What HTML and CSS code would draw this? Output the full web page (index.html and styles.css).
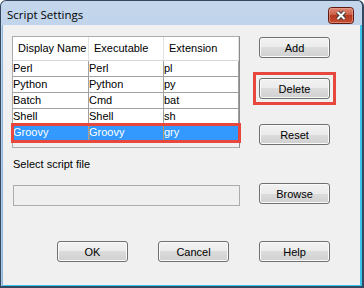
FILE: index.html
```html
<!DOCTYPE html>
<html lang="en">
<head>
  <meta charset="UTF-8" />
  <title>Script Settings</title>
  <link rel="stylesheet" href="styles.css">
</head>
<body>

<div class="window">
  <div class="titlebar">
    <span class="title">Script Settings</span>
    <div class="tb-exit">
      <svg width="26" height="17" viewBox="0 0 26 17">
        <defs>
          <linearGradient id="exitbg" x1="0" y1="0" x2="0" y2="1">
            <stop offset="0" stop-color="#dd8b78"/>
            <stop offset="0.5" stop-color="#cc5a42"/>
            <stop offset="0.5" stop-color="#b33a20"/>
            <stop offset="1" stop-color="#c84e32"/>
          </linearGradient>
        </defs>
        <rect x="0.5" y="0.5" width="25" height="16" rx="3" fill="url(#exitbg)" stroke="#5e1a12"/>
        <rect x="1.5" y="1.5" width="23" height="14" rx="2" fill="none" stroke="#e9a898" stroke-opacity="0.6"/>
        <path d="M9.5 5 L16.5 12 M16.5 5 L9.5 12" stroke="#3e3e3e" stroke-width="4" fill="none"/>
        <path d="M9.5 5 L16.5 12 M16.5 5 L9.5 12" stroke="#fff" stroke-width="2" fill="none"/>
      </svg>
    </div>
  </div>

  <div class="client">
    <div class="main">
      <div class="left">
        <div class="list">
          <div class="row head">
            <div class="cell">Display Name</div>
            <div class="cell">Executable</div>
            <div class="cell">Extension</div>
          </div>
          <div class="row">
            <div class="cell">Perl</div><div class="cell">Perl</div><div class="cell">pl</div>
          </div>
          <div class="row">
            <div class="cell">Python</div><div class="cell">Python</div><div class="cell">py</div>
          </div>
          <div class="row">
            <div class="cell">Batch</div><div class="cell">Cmd</div><div class="cell">bat</div>
          </div>
          <div class="row">
            <div class="cell">Shell</div><div class="cell">Shell</div><div class="cell">sh</div>
          </div>
          <div class="row selected marked">
            <div class="cell">Groovy</div><div class="cell focus">Groovy</div><div class="cell">gry</div>
          </div>
        </div>
        <div class="label">Select script file</div>
        <div class="field"></div>
      </div>

      <div class="side">
        <button class="btn btn-add">Add</button>
        <div class="mark-box">
          <button class="btn">Delete</button>
        </div>
        <button class="btn btn-reset">Reset</button>
        <button class="btn btn-browse">Browse</button>
      </div>
    </div>

    <div class="footer">
      <button class="btn">OK</button>
      <button class="btn">Cancel</button>
      <button class="btn">Help</button>
    </div>
  </div>
</div>

</body>
</html>
```

FILE: styles.css
```css
body {
  margin: 0;
  background: #fff;
  font-family: "Liberation Sans", Arial, sans-serif;
  font-size: 11px;
  color: #000;
}
.window {
  width: 364px;
  height: 288px;
  box-sizing: border-box;
  display: flex;
  flex-direction: column;
  background: linear-gradient(#c3d6ec, #a9c4e2);
  border: 1px solid #34495f;
  border-right-width: 2px;
  border-bottom-width: 2px;
  border-radius: 6px 6px 0 0;
}
.titlebar {
  height: 24px;
  display: flex;
  align-items: center;
  justify-content: space-between;
  padding: 0 8px 0 6px;
}
.title {
  font-family: "Open Sans", "Noto Sans", sans-serif;
  font-size: 11.5px;
  color: #000;
  margin-top: 3px;
}
.tb-exit {
  flex: none;
  width: 26px;
  height: 17px;
  margin-top: 4px;
}
.tb-exit svg {
  display: block;
}
.client {
  flex: 1;
  margin-left: 1px;
  background: #f0f0f0;
  border-left: 1px solid #8fb7dc;
  border-right: 2px solid #3fc5ec;
  border-bottom: 1px solid #3fc5ec;
  padding: 11px 0 0 9px;
}
.main {
  display: flex;
  gap: 19px;
}
.left {
  width: 228px;
}
.list {
  height: 112px;
  box-sizing: border-box;
  border: 1px solid #acacac;
  border-right-color: #8a8a8a;
  background: #f0f0f0;
}
.row {
  display: grid;
  grid-template-columns: 76px 75px 75px;
  height: 16px;
  background: #fff;
}
.row .cell {
  border-right: 1px solid #a0a0a0;
  border-bottom: 1px solid #a0a0a0;
  line-height: 15px;
  white-space: nowrap;
  overflow: hidden;
}
.row.head {
  height: 24px;
}
.row.head .cell {
  line-height: 23px;
  padding-left: 5px;
  border-right-color: #e3e3e3;
  border-bottom-color: #d8d8d8;
}
.row.selected {
  background: #3399ff;
  color: #fff;
}
.cell.focus {
  outline: 1px dotted #d98a35;
  outline-offset: -1px;
}
.row.marked {
  position: relative;
  z-index: 1;
  outline: 3px solid #e8473e;
  outline-offset: -1px;
}
.label {
  margin-top: 10px;
  line-height: 13px;
  padding-left: 1px;
}
.field {
  margin: 14px 0 0 1px;
  height: 21px;
  box-sizing: border-box;
  border: 1px solid #acacac;
  background: #efefef;
}
.side {
  display: flex;
  flex-direction: column;
  align-items: flex-start;
}
.btn {
  width: 71px;
  height: 21px;
  padding: 0;
  font-family: "Liberation Sans", Arial, sans-serif;
  font-size: 11px;
  color: #000;
  border: 1px solid #707070;
  border-radius: 3px;
  background: linear-gradient(#f2f2f2, #ebebeb 50%, #dcdcdc 50%, #d0d0d0);
  box-shadow: inset 0 0 0 1px #fafafa;
}
.btn-add { margin-top: 1px; }
.mark-box {
  margin: 14px 0 0 -6px;
  padding: 3px;
  border: 3px solid #e8473e;
  display: flex;
}
.btn-reset { margin-top: 19px; }
.btn-browse { margin-top: 38px; }
.footer {
  display: flex;
  gap: 30px;
  margin-top: 35px;
  padding-left: 45px;
}
```
